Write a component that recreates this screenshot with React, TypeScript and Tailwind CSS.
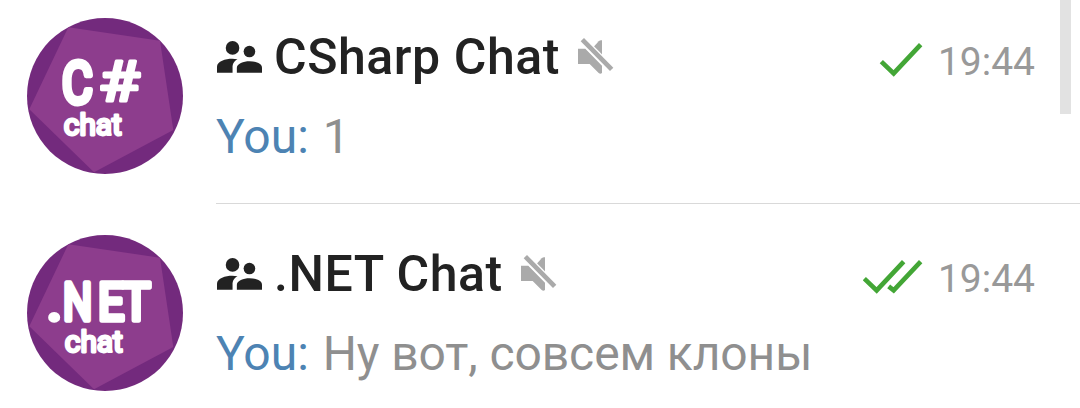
import React from 'react';

type Glyph = { char: string; x: number; y: number; size: number; scale: number; stroke: number };

type Chat = {
  id: string;
  title: string;
  message: string;
  time: string;
  read: boolean;
  logo: Glyph[];
  caption: { x: number; y: number };
};

const chats: Chat[] = [
  {
    id: 'csharp',
    title: 'CSharp Chat',
    message: '1',
    time: '19:44',
    read: false,
    logo: [
      { char: 'C', x: 35, y: 85.3, size: 57.5, scale: 0.82, stroke: 6 },
      { char: '#', x: 71, y: 83, size: 56, scale: 1.22, stroke: 3.2 },
    ],
    caption: { x: 36.8, y: 117 },
  },
  {
    id: 'dotnet',
    title: '.NET Chat',
    message: 'Ну вот, совсем клоны',
    time: '19:44',
    read: true,
    logo: [
      { char: '.', x: 20.5, y: 84.5, size: 48, scale: 1.1, stroke: 5.5 },
      { char: 'N', x: 36, y: 84.5, size: 52.5, scale: 0.78, stroke: 5.5 },
      { char: 'E', x: 71, y: 84.5, size: 52.5, scale: 0.88, stroke: 5.5 },
      { char: 'T', x: 95, y: 84.5, size: 52.5, scale: 0.91, stroke: 5.5 },
    ],
    caption: { x: 37.8, y: 116.5 },
  },
];

function Avatar({ chat }: { chat: Chat }) {
  return (
    <svg viewBox="0 0 156 156" className="mt-[31px] size-[156px] shrink-0 rounded-full bg-[#732a7d]">
      <path d="M41.3 9.3 133 22.7 146.3 112 67 154.3 2.3 91.3Z" fill="#8d3d8d" />
      <g fill="#fff" stroke="#fff" strokeLinejoin="round" className="font-['Roboto',sans-serif] font-normal">
        {chat.logo.map((g) => (
          <text key={g.char} transform={`translate(${g.x} ${g.y}) scale(${g.scale} 1)`} fontSize={g.size} strokeWidth={g.stroke}>
            {g.char}
          </text>
        ))}
        <text x={chat.caption.x} y={chat.caption.y} fontSize={30} strokeWidth={2.8} textLength={58} lengthAdjust="spacingAndGlyphs">
          chat
        </text>
      </g>
    </svg>
  );
}

function GroupIcon() {
  return (
    <svg viewBox="0 0 136 98" className="mb-0.5 ml-px h-[33px] w-[45px] shrink-0" fill="#222">
      <circle cx="47" cy="23" r="20.5" />
      <circle cx="98" cy="34" r="17.5" />
      <path d="M0 98V80C0 64 26 56 46 56c6 0 11 .5 16 1.500C50 64 47 73 47 82v16Z" />
      <path d="M60 98V83c0-13 20-20 38-20s38 7 38 20v15Z" />
    </svg>
  );
}

function MutedIcon() {
  return (
    <svg viewBox="0 0 108 108" className="mb-0.5 size-9 shrink-0" fill="#aaa">
      <path d="M0 32h22l50 51v22q-5 4-10 0L35 78H0Z" />
      <path d="M44 30 62 10q5-5 10-3v51Z" />
      <path d="m12 4 90 91" stroke="#fff" strokeWidth="22" />
      <path d="m13 5 88 89" stroke="#aaa" strokeWidth="14" />
    </svg>
  );
}

function Status({ read }: { read: boolean }) {
  return (
    <svg viewBox="0 0 180 102" className="mt-[5px] h-[34px] w-[60px] shrink-0" fill="none" stroke="#43a636" strokeWidth="14">
      {read ? (
        <>
          <path d="M4 56 41 91 122 5" />
          <path d="m77 79 15 12 81-86" />
        </>
      ) : (
        <path d="m55 56 37 35 81-86" />
      )}
    </svg>
  );
}

function ChatRow({ chat }: { chat: Chat }) {
  return (
    <li className="flex h-[217px] gap-[33px] pl-[27px]">
      <Avatar chat={chat} />
      <div className="min-w-0 flex-1 border-b border-[#d9d9d9] pt-10 pr-[45px]">
        <div className="flex h-[60px] items-center">
          <GroupIcon />
          <h2 className="ml-3 text-[50px] leading-[60px] font-medium tracking-[0.55px] whitespace-nowrap text-[#222]">
            {chat.title}
          </h2>
          <span className="ml-[18px]">
            <MutedIcon />
          </span>
          <div className="ml-auto flex items-center">
            <Status read={chat.read} />
            <time className="mt-[9px] ml-[15px] text-[39px] leading-[60px] text-[#999]">{chat.time}</time>
          </div>
        </div>
        <p className="mt-5 text-[48px] leading-[60px] whitespace-nowrap text-[#8f8f8f]">
          <span className="mr-0.5 text-[#4d83b3]">You:</span>{' '}
          <span className="tracking-[-0.1px]">{chat.message}</span>
        </p>
      </div>
    </li>
  );
}

export default function App() {
  return (
    <main className="relative h-[408px] w-[1080px] overflow-hidden bg-white font-['Roboto',sans-serif]">
      <ul className="-mt-[13px]">
        {chats.map((chat) => (
          <ChatRow key={chat.id} chat={chat} />
        ))}
      </ul>
      <div className="absolute top-0 right-[9px] h-[114px] w-[11px] bg-[#e2e2e2]" />
    </main>
  );
}
